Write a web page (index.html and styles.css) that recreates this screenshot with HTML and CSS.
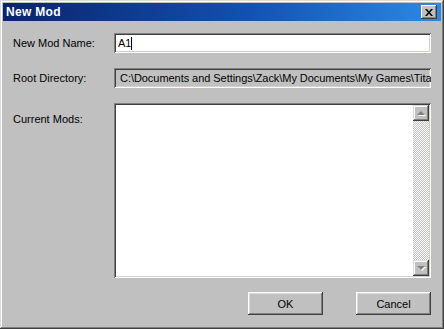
FILE: index.html
```html
<!DOCTYPE html>
<html lang="en">

<head>
    <meta charset="UTF-8">
    <title>New Mod</title>
    <link rel="stylesheet" href="styles.css">
</head>

<body>

    <div class="window">
        <!-- Caption bar -->
        <div class="caption">
            <span class="caption-title">New Mod</span>
            <button class="close-btn" aria-label="Close">
                <svg width="8" height="7" viewBox="0 0 8 7">
                    <path d="M0 0h2l2 2.5L6 0h2L5 3.5 8 7H6L4 4.5 2 7H0l3-3.5z" fill="#000"/>
                </svg>
            </button>
        </div>

        <div class="content">
            <div class="form-row">
                <label for="modName">New Mod Name:</label>
                <div class="field">
                    <input type="text" id="modName" value="A1"><span class="caret"></span>
                </div>
            </div>

            <div class="form-row">
                <label>Root Directory:</label>
                <div class="field readonly">C:\Documents and Settings\Zack\My Documents\My Games\Tita</div>
            </div>

            <div class="form-row top">
                <label>Current Mods:</label>
                <div class="listbox">
                    <div class="list-items"></div>
                    <div class="scrollbar">
                        <div class="arrow up"><span></span></div>
                        <div class="track"></div>
                        <div class="arrow down"><span></span></div>
                    </div>
                </div>
            </div>

            <div class="actions">
                <button class="btn">OK</button>
                <button class="btn">Cancel</button>
            </div>
        </div>
    </div>

</body>

</html>
```

FILE: styles.css
```css
body {
    margin: 0;
    background-color: #c0c0c0;
    font-family: 'Liberation Sans', Arial, sans-serif;
    font-size: 11px;
    color: #000;
}

/* Window frame - classic raised border */
.window {
    width: 444px;
    height: 329px;
    box-sizing: border-box;
    padding: 3px;
    background-color: #c0c0c0;
    box-shadow: inset -1px -1px 0 #404040, inset 1px 1px 0 #dcdcdc,
                inset -2px -2px 0 #808080, inset 2px 2px 0 #fff;
    display: flex;
    flex-direction: column;
}

.caption {
    height: 18px;
    display: flex;
    align-items: center;
    justify-content: space-between;
    padding: 0 4px 0 3px;
    background: linear-gradient(to right, #0a246a, #1250b0 55%, #2c8ae4);
}

.caption-title {
    color: #fff;
    font-weight: 700;
    font-size: 12px;
    letter-spacing: 0.3px;
}

.close-btn {
    width: 16px;
    height: 14px;
    padding: 0;
    border: none;
    background-color: #c0c0c0;
    box-shadow: inset -1px -1px 0 #404040, inset 1px 1px 0 #fff,
                inset -2px -2px 0 #808080;
    display: flex;
    align-items: center;
    justify-content: center;
}

.content {
    flex: 1;
    padding: 12px 10px 0 10px;
    display: flex;
    flex-direction: column;
    gap: 15px;
}

.form-row {
    display: grid;
    grid-template-columns: 101px 317px;
    align-items: center;
}

.form-row.top {
    align-items: start;
}

.form-row.top label {
    padding-top: 10px;
}

/* Sunken field */
.field,
.listbox {
    box-sizing: border-box;
    background-color: #fff;
    box-shadow: inset 1px 1px 0 #808080, inset -1px -1px 0 #fff,
                inset 2px 2px 0 #404040, inset -2px -2px 0 #d4d0c8;
}

.field {
    height: 20px;
    padding: 0 4px;
    display: flex;
    align-items: center;
    overflow: hidden;
    white-space: nowrap;
}

.field input {
    border: none;
    outline: none;
    padding: 0;
    margin: 0;
    width: 13px;
    font: inherit;
    background: transparent;
}

.caret {
    display: inline-block;
    width: 1px;
    height: 13px;
    background-color: #000;
}

.field.readonly {
    background-color: #c0c0c0;
    padding-left: 6px;
    letter-spacing: -0.05px;
}

.listbox {
    height: 175px;
    padding: 2px;
    display: flex;
}

.list-items {
    flex: 1;
}

.scrollbar {
    width: 16px;
    display: flex;
    flex-direction: column;
}

.track {
    flex: 1;
    background: repeating-conic-gradient(#c0c0c0 0 25%, #fff 0 50%) 0 0 / 2px 2px;
}

.arrow {
    height: 16px;
    background-color: #c0c0c0;
    box-shadow: inset -1px -1px 0 #404040, inset 1px 1px 0 #dcdcdc,
                inset -2px -2px 0 #808080, inset 2px 2px 0 #fff;
    display: flex;
    align-items: center;
    justify-content: center;
}

/* disabled arrow glyph */
.arrow span {
    width: 0;
    height: 0;
    border-left: 4px solid transparent;
    border-right: 4px solid transparent;
}

.arrow.up span {
    border-bottom: 4px solid #808080;
    filter: drop-shadow(1px 1px 0 #fff);
}

.arrow.down span {
    border-top: 4px solid #808080;
    filter: drop-shadow(1px 1px 0 #fff);
}

.actions {
    display: flex;
    justify-content: flex-end;
    gap: 33px;
    margin-top: -1px;
}

.btn {
    width: 75px;
    height: 23px;
    padding: 0;
    border: none;
    font: inherit;
    color: #000;
    background-color: #c0c0c0;
    box-shadow: inset -1px -1px 0 #404040, inset 1px 1px 0 #fff,
                inset -2px -2px 0 #808080, inset 2px 2px 0 #dcdcdc;
}
```
